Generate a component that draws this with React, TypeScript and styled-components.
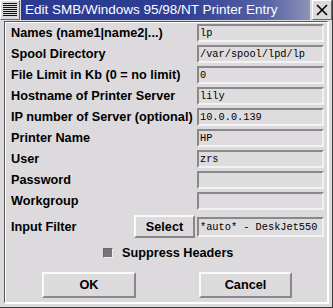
import React from "react";
import styled, { createGlobalStyle } from "styled-components";

const GlobalStyle = createGlobalStyle`
  html, body { margin: 0; padding: 0; background: #dcdadc; }
`;

const Window = styled.div`
  width: 333px;
  height: 308px;
  box-sizing: border-box;
  display: flex;
  flex-direction: column;
  background: #dcdadc;
  border-right: 1px solid #3a3a3a;
  border-bottom: 1px solid #3a3a3a;
  font-family: "Liberation Sans", Arial, sans-serif;
`;

const TitleBar = styled.div`
  height: 20px;
  display: flex;
  align-items: stretch;
  gap: 1px;
`;

const MenuButton = styled.div`
  width: 20px;
  box-sizing: border-box;
  border: 1px solid #fff;
  border-right-color: #6a686a;
  border-bottom-color: #6a686a;
  background: repeating-linear-gradient(
    to bottom,
    #111 0px,
    #111 1px,
    #dcdadc 1px,
    #dcdadc 2px
  );
  background-size: 14px 14px;
  background-position: 2px 2px;
  background-repeat: no-repeat;
`;

const Caption = styled.div`
  flex: 1;
  background: linear-gradient(to right, #2b3a92 0%, #2f3e94 55%, #5763a4 85%, #8c92b8 100%);
  color: #fff;
  font-size: 13.5px;
  line-height: 20px;
  padding-left: 4px;
  white-space: nowrap;
  overflow: hidden;
`;

const CloseButton = styled.div`
  width: 20px;
  box-sizing: border-box;
  margin-left: 1px;
  border: 1px solid #fff;
  border-right-color: #6a686a;
  border-bottom-color: #6a686a;
  display: flex;
  align-items: center;
  justify-content: center;
`;

const Body = styled.div`
  flex: 1;
  padding: 1px 4px 4px 4px;
  display: flex;
`;

const Frame = styled.div`
  flex: 1;
  box-sizing: border-box;
  border-style: solid;
  border-width: 1px;
  border-color: #555 #fff #fff #555;
  box-shadow: inset 1px 1px 0 #fff, 1px 1px 0 #fff;
  padding: 2px 3px 0 6px;
  display: flex;
  flex-direction: column;
`;

const FieldGrid = styled.div`
  display: grid;
  grid-template-columns: 1fr 127px;
  grid-auto-rows: 18px;
  row-gap: 3px;
`;

const Label = styled.div`
  font-weight: bold;
  font-size: 12.7px;
  color: #000;
  display: flex;
  align-items: center;
  white-space: nowrap;
`;

const Field = styled.div<{ $tall?: boolean }>`
  box-sizing: border-box;
  height: ${(p) => (p.$tall ? "20px" : "auto")};
  border-style: solid;
  border-width: 2px;
  border-color: #8a888a #f2f2f2 #f2f2f2 #8a888a;
  background: #dedcde;
  font-family: "Liberation Mono", "Courier New", monospace;
  font-size: 10.3px;
  line-height: ${(p) => (p.$tall ? "16px" : "14px")};
  padding-left: 1px;
  color: #000;
  white-space: nowrap;
  overflow: hidden;
`;

const FilterRow = styled.div`
  margin-top: 5px;
  display: grid;
  grid-template-columns: 1fr 127px;
  align-items: center;
`;

const FilterLeft = styled.div`
  display: flex;
  align-items: center;
  justify-content: space-between;
  padding-right: 2px;
`;

const RaisedButton = styled.div<{ $w: number; $h: number }>`
  width: ${(p) => p.$w}px;
  height: ${(p) => p.$h}px;
  box-sizing: border-box;
  border-style: solid;
  border-width: 2px;
  border-color: #fafafa #8a888a #8a888a #fafafa;
  background: #dcdadc;
  font-weight: bold;
  font-size: 12.7px;
  display: flex;
  align-items: center;
  justify-content: center;
`;

const CheckRow = styled.div`
  margin-top: 8px;
  display: flex;
  align-items: center;
  gap: 9px;
  padding-left: 92px;
`;

const CheckBox = styled.div`
  width: 10px;
  height: 10px;
  box-sizing: border-box;
  border-style: solid;
  border-width: 1px;
  border-color: #6a686a #eee #eee #6a686a;
  background: #76747a;
`;

const ButtonRow = styled.div`
  margin-top: 12px;
  display: flex;
  padding-left: 31px;
  gap: 63px;
`;

const fields: [string, string][] = [
  ["Names (name1|name2|...)", "lp"],
  ["Spool Directory", "/var/spool/lpd/lp"],
  ["File Limit in Kb (0 = no limit)", "0"],
  ["Hostname of Printer Server", "lily"],
  ["IP number of Server (optional)", "10.0.0.139"],
  ["Printer Name", "HP"],
  ["User", "zrs"],
  ["Password", ""],
  ["Workgroup", ""],
];

export default function App() {
  return (
    <>
      <GlobalStyle />
      <Window>
        <TitleBar>
          <MenuButton />
          <Caption>Edit SMB/Windows 95/98/NT Printer Entry</Caption>
          <CloseButton>
            <svg width="12" height="12" viewBox="0 0 12 12">
              <path d="M1 1 L11 11 M11 1 L1 11" stroke="#000" strokeWidth="1.6" />
            </svg>
          </CloseButton>
        </TitleBar>
        <Body>
          <Frame>
            <FieldGrid>
              {fields.map(([label, value]) => (
                <React.Fragment key={label}>
                  <Label>{label}</Label>
                  <Field>{value}</Field>
                </React.Fragment>
              ))}
            </FieldGrid>
            <FilterRow>
              <FilterLeft>
                <Label>Input Filter</Label>
                <RaisedButton $w={61} $h={23}>Select</RaisedButton>
              </FilterLeft>
              <Field $tall>*auto* - DeskJet550</Field>
            </FilterRow>
            <CheckRow>
              <CheckBox />
              <Label>Suppress Headers</Label>
            </CheckRow>
            <ButtonRow>
              <RaisedButton $w={94} $h={26}>OK</RaisedButton>
              <RaisedButton $w={93} $h={26}>Cancel</RaisedButton>
            </ButtonRow>
          </Frame>
        </Body>
      </Window>
    </>
  );
}
